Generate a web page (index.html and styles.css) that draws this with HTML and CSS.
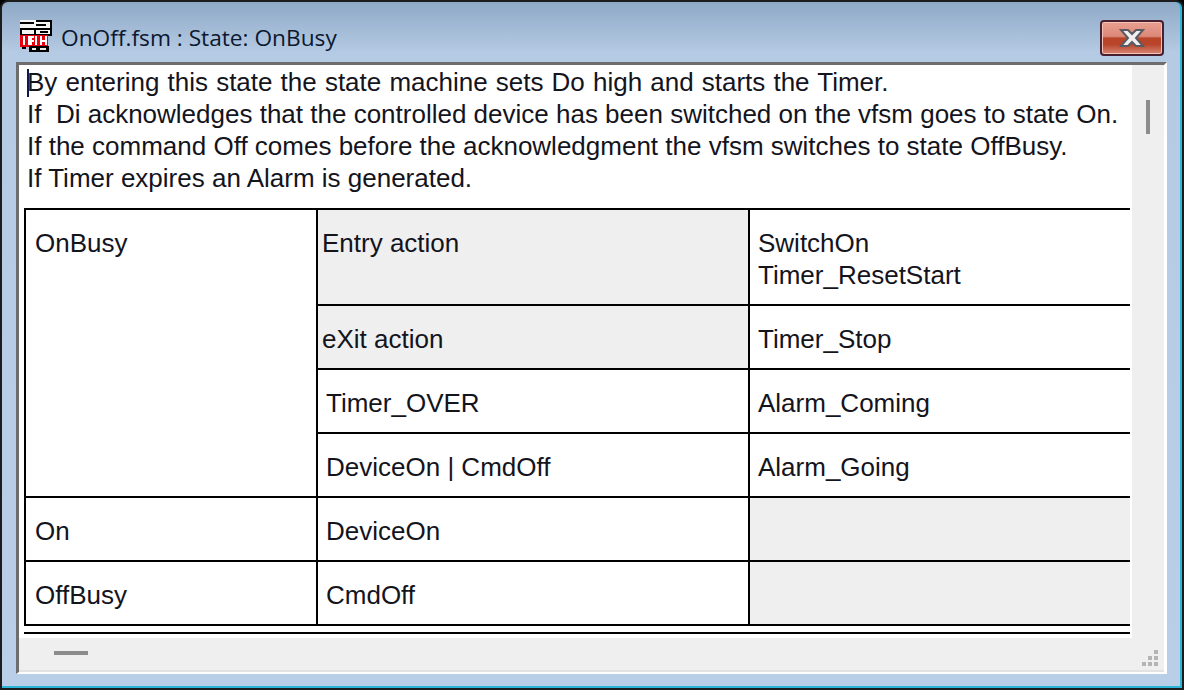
FILE: index.html
```html
<!DOCTYPE html>
<html>
<head>
<meta charset="utf-8">
<title>OnOff.fsm : State: OnBusy</title>
<link rel="stylesheet" href="styles.css">
</head>
<body>
<div class="window">
  <header class="titlebar">
    <svg class="appicon" width="32" height="32" viewBox="0 0 32 32">
      <rect x="0" y="0" width="32" height="16" fill="#f4f4f4"/>
      <path d="M0 2h14v2H0zM0 8h32v2H0zM0 14h32v2H0zM16 0h16v2H16zM30 0h2v14h-2zM16 4h10v2H16zM14 8h2v6h-2zM20 11h8v2h-8zM0 10h2v4H0z" fill="#000"/>
      <rect x="0" y="15" width="28" height="12" fill="#e8000f"/>
      <path d="M3 16h2v9H3zM8 16h6v2h-2v2h2v2h-2v3H8zM15 16h2v9h-2zM20 16h2v4h3v-4h2v9h-2v-3h-3v3h-2z" fill="#fff"/>
      <path d="M2 27h4v2H2z" fill="#000"/>
      <rect x="9" y="26" width="20" height="6" fill="#000"/>
      <path d="M12 28h4v2h-4zM20 28h6v2h-6z" fill="#e8e8e8"/>
    </svg>
    <span class="title">OnOff.fsm : State: OnBusy</span>
    <button class="close" aria-label="Close">
      <svg width="28" height="20" viewBox="0 0 28 20"><path d="M3 2h7l4 4 4-4h7l-7 8 7 8h-7l-4-4-4 4H3l7-8z" fill="#f0f0f0" stroke="#5a5a62" stroke-width="2"/></svg>
    </button>
  </header>
  <main class="client">
    <div class="upper">
      <div class="doc">
        <p class="desc"><span class="caret"></span><span class="first">By entering this state the state machine sets Do high and starts the Timer.</span><br>If&nbsp; Di acknowledges that the controlled device has been switched on the vfsm goes to state On.<br>If the command Off comes before the acknowledgment the vfsm switches to state OffBusy.<br>If Timer expires an Alarm is generated.</p>
        <table class="states">
          <colgroup><col class="c1"><col class="c2"><col class="c3"></colgroup>
          <tr class="r96">
            <td rowspan="4" class="name">OnBusy</td>
            <td class="grey tight">Entry action</td>
            <td>SwitchOn<br>Timer_ResetStart</td>
          </tr>
          <tr class="r64"><td class="grey tight">eXit action</td><td>Timer_Stop</td></tr>
          <tr class="r64"><td>Timer_OVER</td><td>Alarm_Coming</td></tr>
          <tr class="r64"><td>DeviceOn | CmdOff</td><td>Alarm_Going</td></tr>
          <tr class="r64"><td class="name">On</td><td>DeviceOn</td><td class="grey"></td></tr>
          <tr class="r64"><td class="name">OffBusy</td><td>CmdOff</td><td class="grey"></td></tr>
        </table>
        <div class="rule"></div>
      </div>
      <div class="vscroll"><span class="vthumb"></span></div>
    </div>
    <div class="hscroll">
      <span class="hthumb"></span>
      <svg class="grip" width="16" height="16" viewBox="0 0 16 16"><path d="M12 0h4v4h-4zM6 6h4v4H6zM12 6h4v4h-4zM0 12h4v4H0zM6 12h4v4H6zM12 12h4v4h-4z" fill="#b4b4b4"/></svg>
    </div>
  </main>
</div>
</body>
</html>
```
FILE: styles.css
```css
* { box-sizing: border-box; }
html, body { margin: 0; height: 100%; background: #000; overflow: hidden; }
body { font-family: "Liberation Sans", Arial, sans-serif; }
.window {
  width: 1184px; height: 690px;
  display: flex; flex-direction: column;
  padding: 0 15px 14px 14px;
  border: 2px solid #1c1c1c;
  border-radius: 8px 8px 0 0;
  box-shadow: inset 0 -2px 0 #2bb6d8, inset -2px 0 0 #2bb6d8;
  background: linear-gradient(180deg, #8ea9c6 0, #b5cae3 50px, #b9cfe8 100%);
}
.titlebar {
  height: 60px; flex: none;
  display: flex; align-items: center; position: relative;
  padding-left: 4px; padding-top: 14px;
}
.appicon { flex: none; margin-top: -6px; }
.title { font-family: "Open Sans", sans-serif; font-size: 22.7px; margin-left: 9px; color: #0c1830; margin-top: -3px; }
.close {
  position: absolute; top: 18px; right: 3px;
  width: 64px; height: 36px; padding: 0;
  display: flex; align-items: center; justify-content: center;
  border: 2px solid #4a2030; border-radius: 4px;
  background: linear-gradient(180deg, #e8a090 0, #dc8878 45%, #b8452a 50%, #b8452a 70%, #d88878 100%);
  box-shadow: inset 0 0 0 1px #f2c4b8;
}
.client {
  flex: 1; min-height: 0; display: flex; flex-direction: column;
  border-top: 3px solid #6d6d6d; border-left: 3px solid #6d6d6d;
  border-right: 3px solid #fff; border-bottom: 2px solid #fff;
  background: #fff;
}
.upper { flex: 1; min-height: 0; display: flex; }
.doc { flex: none; width: 1113px; background: #fff; padding-left: 5px; overflow: hidden; }
.desc {
  margin: 0; font-size: 26px; line-height: 32px; color: #14141c;
  white-space: nowrap; position: relative; padding: 1px 0 0 3px;
  height: 143px;
}
.first { word-spacing: 0.9px; }
.caret { position: absolute; left: 3px; top: 4px; width: 2px; height: 28px; background: #101850; }
.states {
  border-collapse: collapse; table-layout: fixed;
  width: 1105px; font-size: 26px; color: #14141c;
  border-top: 2px solid #000; border-left: 2px solid #000; border-bottom: 2px solid #000;
}
.c1 { width: 292px; } .c2 { width: 432px; } .c3 { width: 381px; }
.states td {
  border: 2px solid #000; border-right: 0; padding: 17px 0 0 8px;
  vertical-align: top; line-height: 32px;
}
.states td + td { border-left: 2px solid #000; }
.states .name { padding-left: 9px; }
.states .tight { padding-left: 4px; }
.r96 { height: 96px; } .r64 { height: 64px; }
.grey { background: #efefef; }
.rule { height: 2px; width: 1106px; background: #000; margin-top: 6px; }
.vscroll { flex: none; width: 32px; background: #efefef; position: relative; }
.vthumb { position: absolute; left: 14px; top: 35px; width: 4px; height: 34px; background: #8c8c8c; }
.hscroll { flex: none; height: 34px; background: #efefef; position: relative; border-bottom: 2px solid #e2e2e2; }
.hthumb { position: absolute; left: 35px; top: 13px; width: 34px; height: 4px; background: #8c8c8c; }
.grip { position: absolute; right: 6px; bottom: 4px; }
```
